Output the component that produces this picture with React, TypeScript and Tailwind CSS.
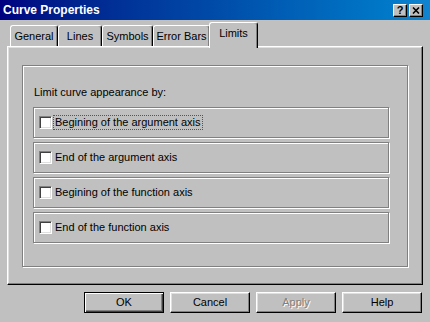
import React from 'react';

const etched = 'border border-[#808080] shadow-[inset_1px_1px_0_#fff,1px_1px_0_#fff]';

const tabs = [
  { label: 'General', w: 'w-[48px]' },
  { label: 'Lines', w: 'w-[44px]' },
  { label: 'Symbols', w: 'w-[51px]' },
  { label: 'Error Bars', w: 'w-[57px]' },
];

const limits = [
  'Begining of the argument axis',
  'End of the argument axis',
  'Begining of the function axis',
  'End of the function axis',
];

function Checkbox() {
  return (
    <span className="w-[13px] h-[13px] shrink-0 bg-white border border-t-[#808080] border-l-[#808080] border-r-white border-b-white shadow-[inset_1px_1px_0_#404040,inset_-1px_-1px_0_#dfdfdf]" />
  );
}

function Button({ label, disabled, isDefault }: { label: string; disabled?: boolean; isDefault?: boolean }) {
  return (
    <button
      className={`w-[80px] h-[21px] flex items-center justify-center text-[11px] bg-[#c0c0c0] border ${
        isDefault
          ? 'border-black shadow-[inset_1px_1px_0_#fff,inset_-1px_-1px_0_#404040,inset_-2px_-2px_0_#808080]'
          : 'border-t-white border-l-white border-r-black border-b-black shadow-[inset_-1px_-1px_0_#808080,inset_1px_1px_0_#dfdfdf]'
      } ${disabled ? 'text-[#808080] [text-shadow:1px_1px_0_#fff]' : 'text-black'}`}
    >
      {label}
    </button>
  );
}

export default function App() {
  return (
    <div
      className="w-[430px] h-[322px] bg-[#c0c0c0] flex flex-col overflow-hidden text-black"
      style={{ fontFamily: '"Liberation Sans", Arial, sans-serif' }}
    >
      {/* Title bar */}
      <div className="h-[20px] shrink-0 flex items-center bg-gradient-to-r from-[#000080] to-[#1084d0] pl-[3px] pr-[7px]">
        <span className="text-white font-bold text-[12px] leading-none">Curve Properties</span>
        <div className="ml-auto flex gap-[2px]">
          <span className="w-[14px] h-[13px] flex items-center justify-center bg-[#c0c0c0] border border-t-white border-l-white border-r-black border-b-black shadow-[inset_-1px_-1px_0_#808080] text-[11px] font-bold leading-none">
            ?
          </span>
          <span className="w-[14px] h-[13px] flex items-center justify-center bg-[#c0c0c0] border border-t-white border-l-white border-r-black border-b-black shadow-[inset_-1px_-1px_0_#808080]">
            <svg width="8" height="7" viewBox="0 0 8 7">
              <path d="M1 0.5 L7 6.5 M7 0.5 L1 6.5" stroke="#000" strokeWidth="1.6" />
            </svg>
          </span>
        </div>
      </div>

      <div className="px-[7px] pt-[2px] flex flex-col">
        {/* Tabs */}
        <div className="h-[24px] flex items-end pl-[3px]">
          {tabs.map(t => (
            <div
              key={t.label}
              className={`${t.w} h-[21px] flex items-center justify-center text-[11px] border-t border-l border-r border-t-white border-l-white border-r-black rounded-t-[3px] shadow-[inset_-1px_0_0_#808080]`}
            >
              {t.label}
            </div>
          ))}
          <div className="relative z-10 -ml-[1px] -mb-[2px] w-[49px] h-[26px] pb-[4px] flex items-center justify-center text-[11px] bg-[#c0c0c0] border-t border-l border-r border-t-white border-l-white border-r-black rounded-t-[3px] shadow-[inset_-1px_0_0_#808080]">
            Limits
          </div>
        </div>

        {/* Tab panel */}
        <div className="h-[239px] border border-t-white border-l-white border-r-black border-b-black shadow-[inset_-1px_-1px_0_#808080,inset_1px_1px_0_#dfdfdf] pl-[14px] pr-[14px] pt-[18px]">
          <div className={`h-[202px] ${etched} pl-[10px] pt-[20px]`}>
            <p className="text-[11px] leading-[13px] pl-[1px]">Limit curve appearance by:</p>
            <div className="mt-[8px] flex flex-col gap-[4px]">
              {limits.map((l, i) => (
                <div key={l} className={`w-[356px] h-[31px] ${etched} flex items-center pl-[5px]`}>
                  <Checkbox />
                  <span
                    className={`ml-[1px] px-[1px] h-[15px] flex items-center text-[11px] border border-dotted ${
                      i === 0 ? 'border-[#555]' : 'border-transparent'
                    }`}
                  >
                    {l}
                  </span>
                </div>
              ))}
            </div>
          </div>
        </div>

        {/* Buttons */}
        <div className="mt-[7px] flex justify-end gap-[6px] pr-[1px]">
          <Button label="OK" isDefault />
          <Button label="Cancel" />
          <Button label="Apply" disabled />
          <Button label="Help" />
        </div>
      </div>
    </div>
  );
}
